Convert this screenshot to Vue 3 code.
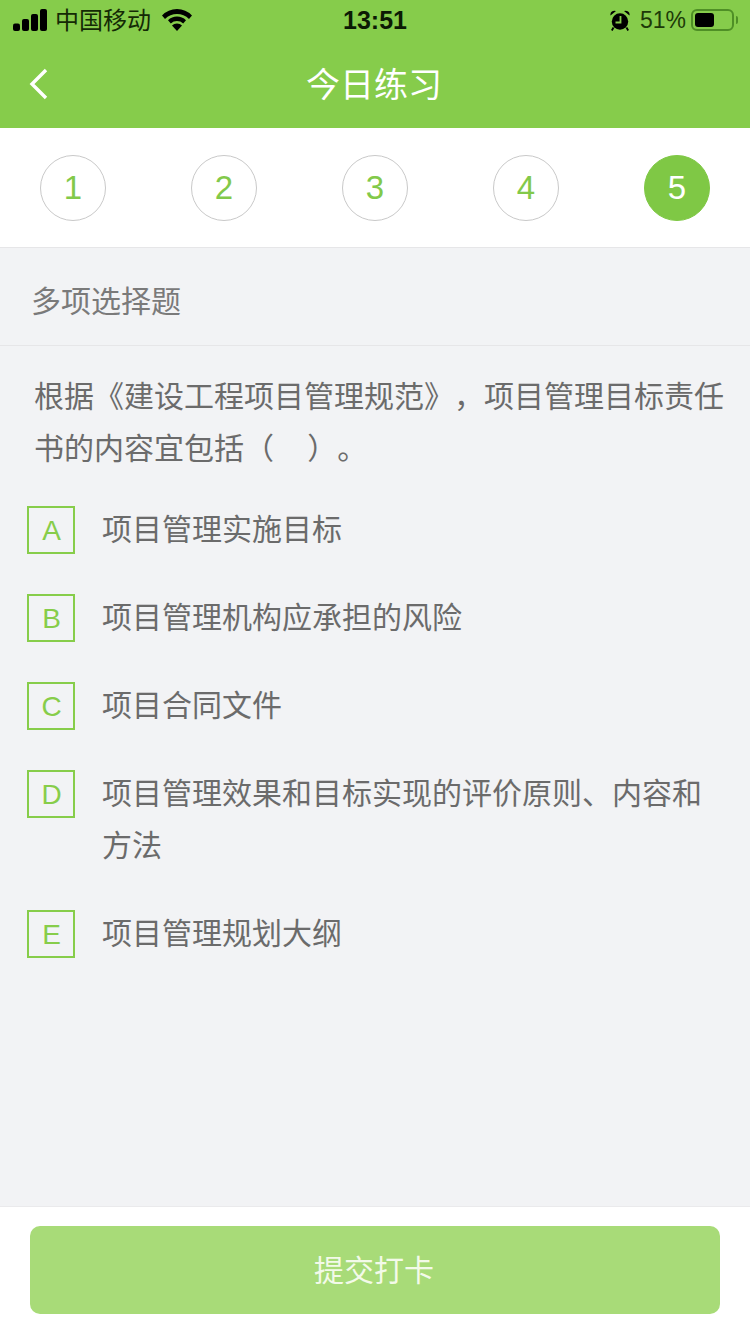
<template>
  <div class="page">
    <header class="top">
      <div class="status">
        <div class="status-left">
          <svg class="signal" width="34" height="22" viewBox="0 0 34 22" fill="#000">
            <rect x="0" y="14.500" width="7" height="7.500" rx="2" />
            <rect x="9" y="10" width="7" height="12" rx="2" />
            <rect x="18" y="5" width="7" height="17" rx="2" />
            <rect x="27" y="0" width="7" height="22" rx="2" />
          </svg>
          <span class="carrier">中国移动</span>
          <svg class="wifi" width="30" height="22" viewBox="0 0 30 22" fill="#000">
            <path d="M15 22l-5-5.500a7 7 0 0 1 10 0z" />
            <path d="M15 7.500a13 13 0 0 1 9 3.700l-2.800 3.300a9 9 0 0 0-12.400 0L6 11.200a13 13 0 0 1 9-3.700z" />
            <path d="M15 0a21 21 0 0 1 15 6.500L27 10a17 17 0 0 0-24 0L0 6.500A21 21 0 0 1 15 0z" />
          </svg>
        </div>
        <span class="time">13:51</span>
        <div class="status-right">
          <svg class="alarm" width="20" height="21" viewBox="0 0 20 21" fill="#000">
            <circle cx="10" cy="11.500" r="8.200" />
            <path d="M0.500 5.500a4 4 0 0 1 5.500-4.500zM19.500 5.500a4 4 0 0 0-5.500-4.500z" />
            <path d="M3.500 17.500l-1.700 3M16.500 17.500l1.700 3" stroke="#000" stroke-width="1.800" />
            <path d="M10.500 6v6.500H5.500" fill="none" stroke="#86cc4b" stroke-width="1.800" />
          </svg>
          <span class="battery-text">51%</span>
          <div class="battery">
            <div class="battery-level"></div>
          </div>
          <div class="battery-cap"></div>
        </div>
      </div>
      <div class="nav">
        <svg class="back" width="20" height="32" viewBox="0 0 20 32">
          <path d="M17 2L3 16l14 14" fill="none" stroke="#fff" stroke-width="3.400" />
        </svg>
        <span class="nav-title">今日练习</span>
      </div>
    </header>

    <div class="steps">
      <div
        v-for="n in 5"
        :key="n"
        class="step"
        :class="{ active: n === current }"
      >{{ n }}</div>
    </div>

    <main class="body">
      <div class="type">多项选择题</div>
      <p class="question">根据《建设工程项目管理规范》，项目管理目标责任书的内容宜包括（ &nbsp; &nbsp;）。</p>
      <ul class="options">
        <li v-for="opt in options" :key="opt.key" class="option">
          <span class="letter">{{ opt.key }}</span>
          <span class="text">{{ opt.text }}</span>
        </li>
      </ul>
    </main>

    <footer class="foot">
      <button class="submit"><span class="submit-label">提交打卡</span></button>
    </footer>
  </div>
</template>

<script setup>
const current = 5;

const options = [
  { key: 'A', text: '项目管理实施目标' },
  { key: 'B', text: '项目管理机构应承担的风险' },
  { key: 'C', text: '项目合同文件' },
  { key: 'D', text: '项目管理效果和目标实现的评价原则、内容和方法' },
  { key: 'E', text: '项目管理规划大纲' }
];
</script>

<style>
html,
body {
  margin: 0;
  background: #f2f3f5;
}
</style>

<style scoped>
.page {
  width: 750px;
  height: 1334px;
  display: flex;
  flex-direction: column;
  overflow: hidden;
  background: #f2f3f5;
  font-family: "Liberation Sans", "Noto Sans CJK SC", sans-serif;
  text-spacing-trim: space-all;
}

.top {
  height: 128px;
  background: #86cc4b;
  flex-shrink: 0;
}

.status {
  height: 40px;
  display: flex;
  align-items: center;
  justify-content: space-between;
  position: relative;
  padding: 0 12px 0 13px;
  color: #000;
}

.status svg {
  display: block;
}

.status-left,
.status-right {
  display: flex;
  align-items: center;
}

.carrier {
  font-size: 24px;
  margin-left: 8px;
  color: #142a05;
  position: relative;
  top: -2px;
}

.wifi {
  margin-left: 11px;
}

.time {
  position: absolute;
  left: 0;
  right: 0;
  text-align: center;
  font-size: 25px;
  font-weight: 700;
  color: #0c1a04;
  pointer-events: none;
}

.battery-text {
  font-size: 23px;
  margin-left: 10px;
  color: #1d3a08;
}

.battery {
  width: 43px;
  height: 22px;
  margin-left: 5px;
  box-sizing: border-box;
  border: 2px solid #4f8f26;
  border-radius: 6px;
  padding: 2px;
}

.battery-level {
  width: 19px;
  height: 100%;
  background: #000;
  border-radius: 3px;
}

.battery-cap {
  width: 2px;
  height: 8px;
  margin-left: 2px;
  background: #4f8f26;
  border-radius: 0 2px 2px 0;
}

.nav {
  height: 88px;
  position: relative;
  display: flex;
  align-items: center;
  justify-content: center;
}

.back {
  position: absolute;
  left: 29px;
  top: 28px;
}

.nav-title {
  color: #fff;
  font-size: 34px;
  position: relative;
  top: -2px;
  left: -1px;
}

.steps {
  height: 119px;
  flex-shrink: 0;
  background: #fff;
  border-bottom: 1px solid #e6e6e8;
  padding: 0 40px;
  display: flex;
  align-items: center;
  justify-content: space-between;
}

.step {
  width: 66px;
  height: 66px;
  box-sizing: border-box;
  border: 1px solid #c9c9c9;
  border-radius: 50%;
  display: flex;
  align-items: center;
  justify-content: center;
  color: #82c94a;
  font-size: 33px;
}

.step.active {
  background: #7fc845;
  border-color: #7fc845;
  color: #fff;
}

.body {
  flex: 1;
  min-height: 0;
}

.type {
  height: 98px;
  box-sizing: border-box;
  border-bottom: 1px solid #e6e6e8;
  padding: 4px 0 0 31px;
  display: flex;
  align-items: center;
  font-size: 30px;
  color: #7a7a7a;
}

.question {
  margin: 25px 0 0;
  padding: 0 20px 0 34px;
  font-size: 30px;
  line-height: 52px;
  color: #6b6b6b;
}

.options {
  list-style: none;
  margin: 31px 0 0;
  padding: 0 46px 0 27px;
}

.option {
  display: flex;
  align-items: flex-start;
  margin-bottom: 38px;
}

.letter {
  width: 48px;
  height: 48px;
  flex-shrink: 0;
  box-sizing: border-box;
  border: 2px solid #87cd4a;
  padding: 2px 0 0 1px;
  display: flex;
  align-items: center;
  justify-content: center;
  color: #87cd4a;
  font-size: 28px;
}

.text {
  margin-left: 27px;
  margin-top: -2px;
  font-size: 30px;
  line-height: 52px;
  color: #6b6b6b;
}

.foot {
  height: 128px;
  flex-shrink: 0;
  box-sizing: border-box;
  background: #fff;
  border-top: 1px solid #eaeaec;
  padding: 19px 30px 0;
}

.submit {
  width: 100%;
  height: 88px;
  border: none;
  border-radius: 10px;
  background: #a8db78;
  color: #f3fae9;
  font-size: 30px;
  font-family: inherit;
  padding: 0;
}

.submit-label {
  position: relative;
  top: -2px;
  left: -1px;
}
</style>
